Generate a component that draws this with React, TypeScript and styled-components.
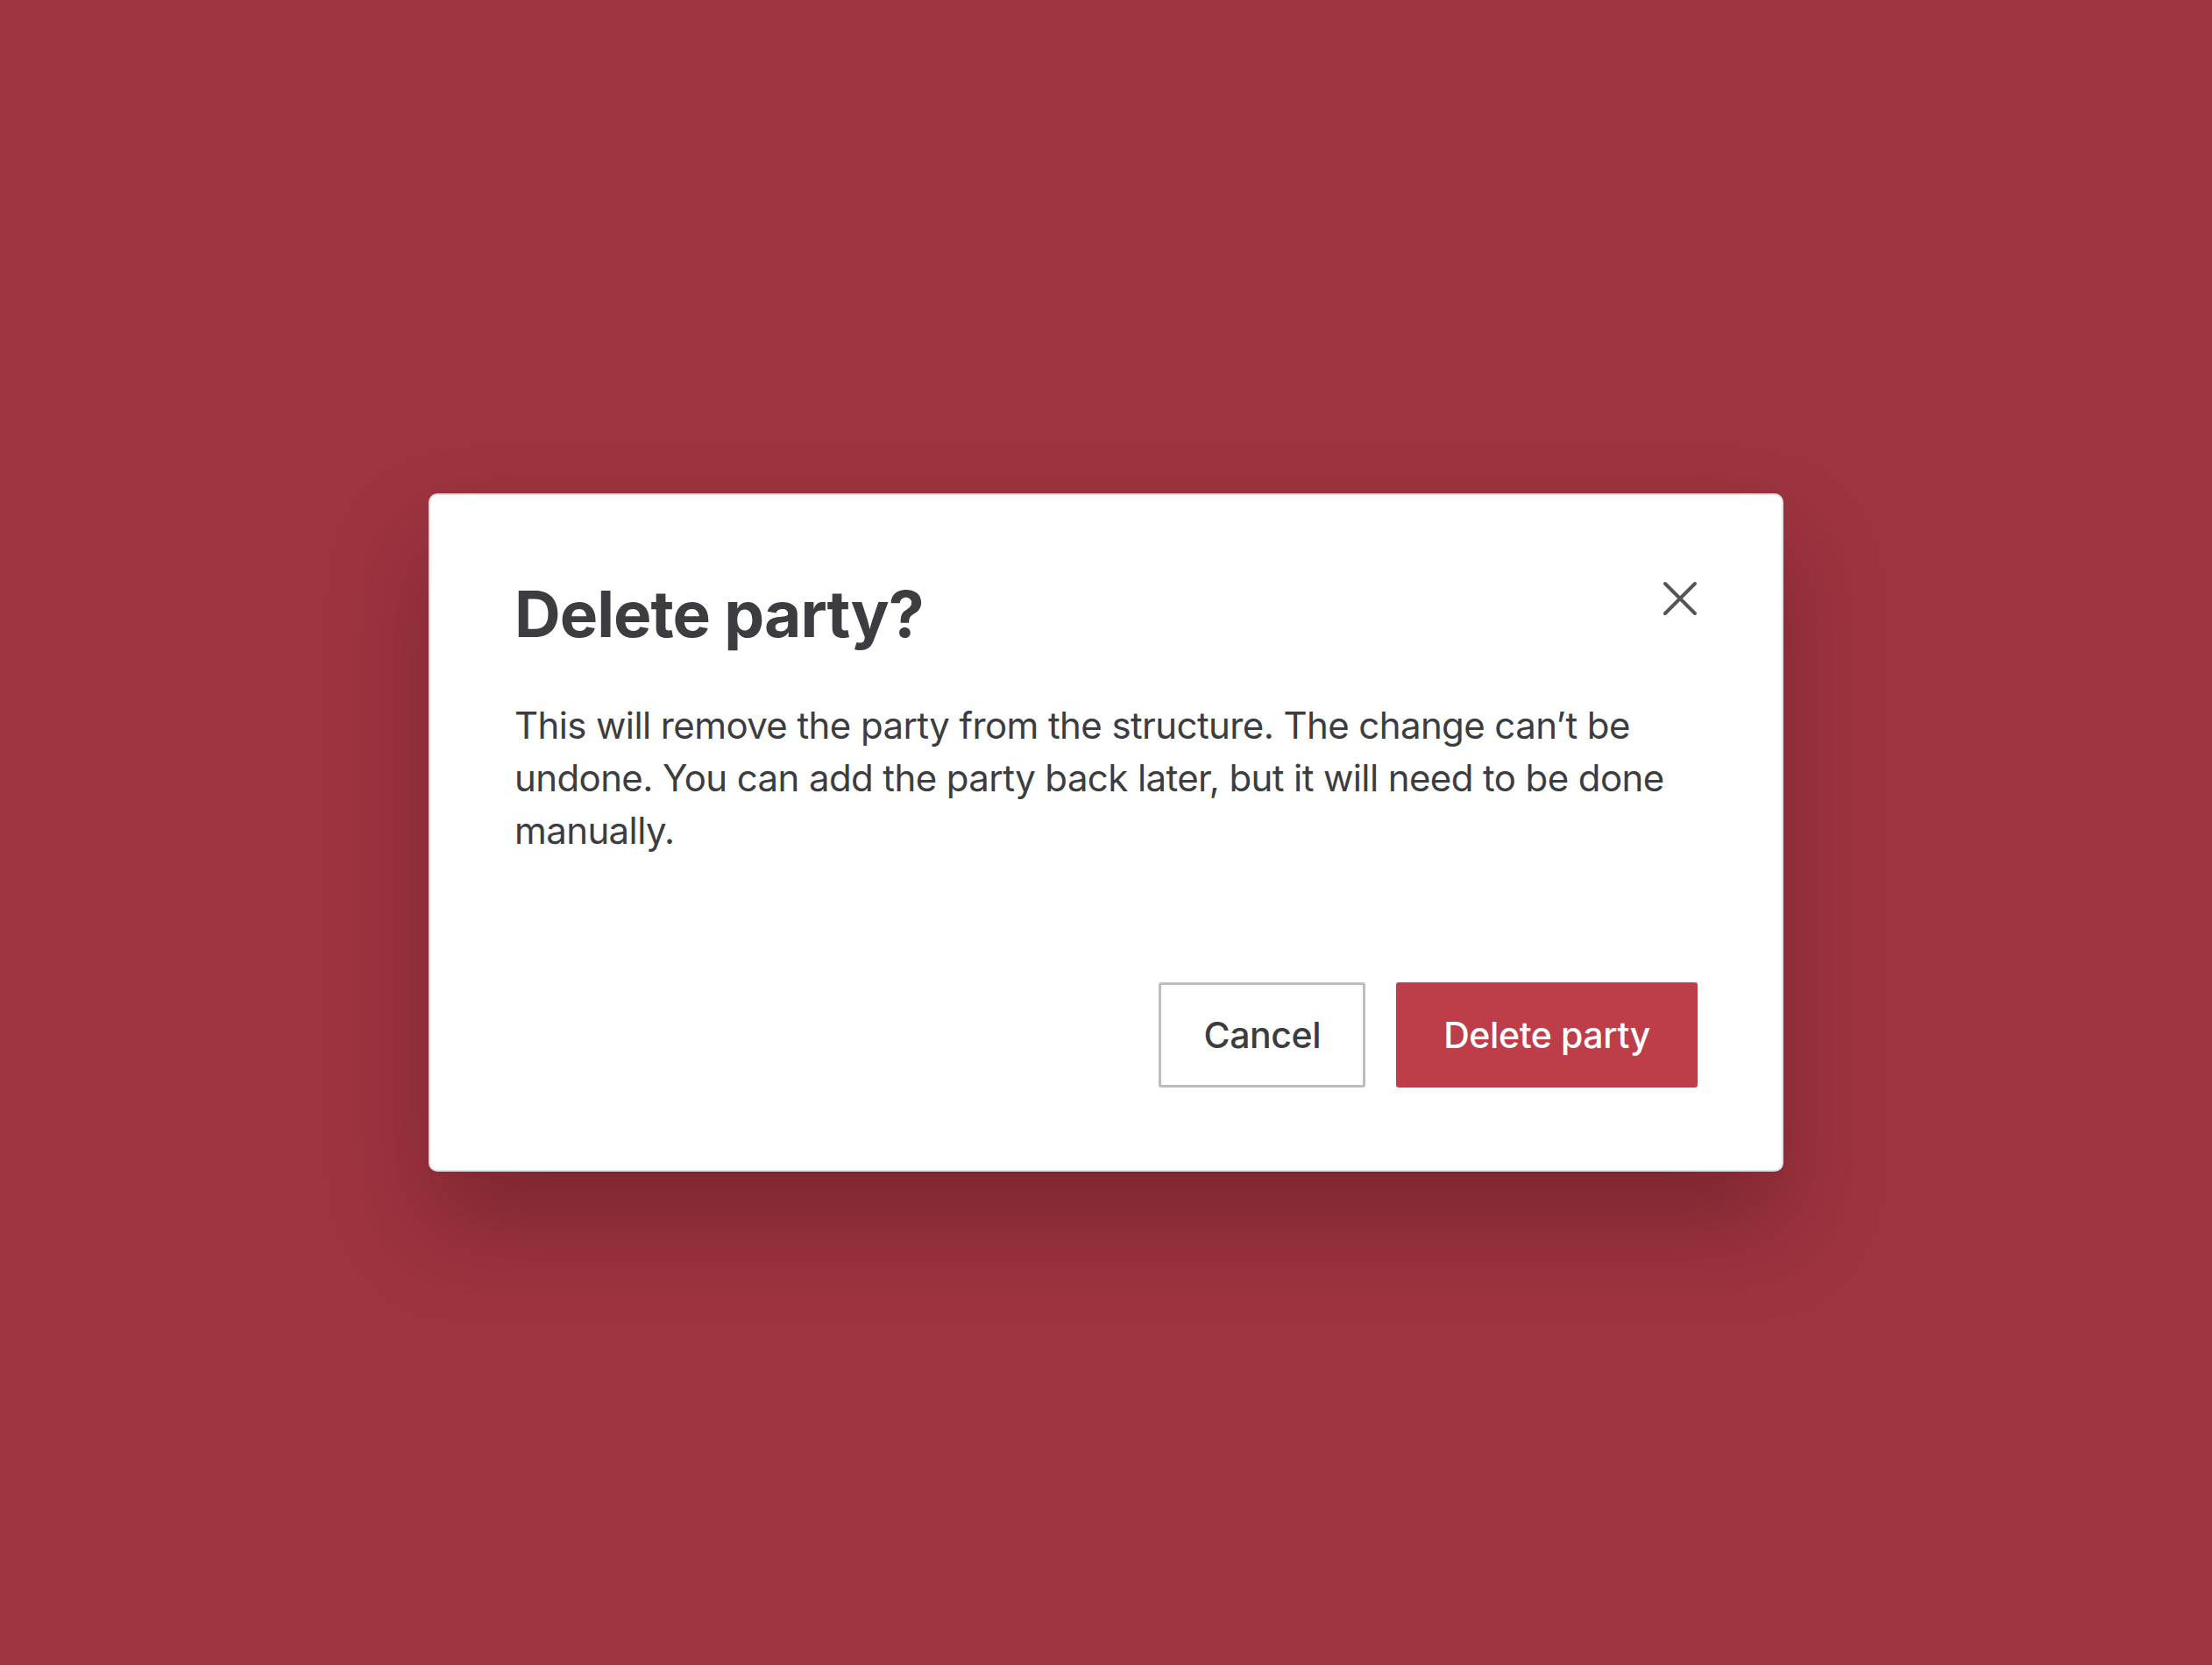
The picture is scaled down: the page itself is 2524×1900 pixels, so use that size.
import React from "react";
import styled, { createGlobalStyle } from "styled-components";

const GlobalStyle = createGlobalStyle`
    html, body {
        margin: 0;
        padding: 0;
    }
    body {
        background: #9e3440;
        font-family: Inter, "Liberation Sans", sans-serif;
    }
`;

const Page = styled.main`
    height: 1900px;
    display: flex;
    align-items: center;
    justify-content: center;
`;

const Dialog = styled.section`
    box-sizing: border-box;
    width: 1546px;
    padding: 92px 96px 94px;
    background: #fff;
    border: 2px solid #e2e2e2;
    border-radius: 10px;
    box-shadow: 0 60px 110px rgba(40, 0, 8, 0.28);
    color: #3c3d41;
    display: flex;
    flex-direction: column;
`;

const Header = styled.div`
    display: flex;
    align-items: flex-start;
    justify-content: space-between;
`;

const Title = styled.h2`
    margin: 0;
    font-size: 73px;
    line-height: 88px;
    font-weight: 700;
    letter-spacing: -1px;
`;

const CloseButton = styled.button`
    margin: 0 -6px 0 0;
    padding: 0;
    width: 52px;
    height: 52px;
    border: 0;
    background: none;
    display: flex;
    align-items: center;
    justify-content: center;
    cursor: pointer;
`;

const Body = styled.p`
    margin: 53px 0 0;
    font-size: 42px;
    line-height: 60px;
    font-weight: 400;
    letter-spacing: -0.6px;
`;

const Actions = styled.div`
    margin-top: 143px;
    display: flex;
    justify-content: flex-end;
    gap: 35px;
`;

const Button = styled.button<{ $danger?: boolean }>`
    box-sizing: border-box;
    height: 120px;
    padding: 0 ${(p) => (p.$danger ? "51px" : "48px")};
    font-family: Inter, "Liberation Sans", sans-serif;
    font-size: 41px;
    font-weight: 500;
    letter-spacing: -0.4px;
    border-radius: 3px;
    cursor: pointer;
    color: ${(p) => (p.$danger ? "#fff" : "#3c3d41")};
    background: ${(p) => (p.$danger ? "#bd3d48" : "#fff")};
    border: 3px solid ${(p) => (p.$danger ? "#bd3d48" : "#bdbdbd")};
`;

function CloseIcon() {
    return (
        <svg width="40" height="40" viewBox="0 0 40 40" fill="none">
            <path d="M3 3L37 37M37 3L3 37" stroke="#555559" strokeWidth="4" strokeLinecap="round" />
        </svg>
    );
}

export default function App() {
    return (
        <>
            <GlobalStyle />
            <Page>
                <Dialog role="dialog" aria-labelledby="dlg-title">
                    <Header>
                        <Title id="dlg-title">Delete party?</Title>
                        <CloseButton aria-label="Close">
                            <CloseIcon />
                        </CloseButton>
                    </Header>
                    <Body>
                        This will remove the party from the structure. The change can’t be
                        undone. You can add the party back later, but it will need to be done
                        manually.
                    </Body>
                    <Actions>
                        <Button>Cancel</Button>
                        <Button $danger>Delete party</Button>
                    </Actions>
                </Dialog>
            </Page>
        </>
    );
}
